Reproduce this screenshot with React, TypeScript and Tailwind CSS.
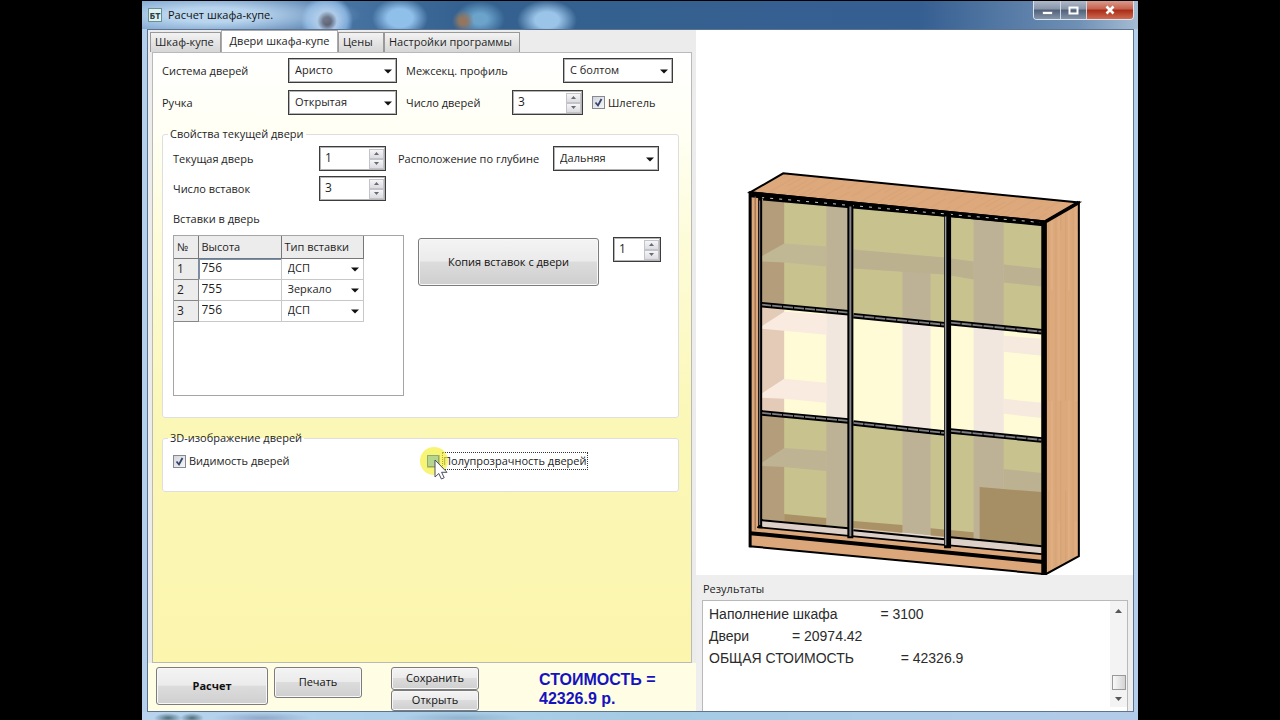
import React, { useState } from 'react';

const LABEL = 'text-[11px] leading-4 text-[#1e1e1e]';

interface SelectProps {
  id: string;
  value: string;
  options: string[];
  className: string;
}

const Select: React.FC<SelectProps> = ({ id, value, options, className }) => (
  <div className={`relative h-[25px] border border-[#3c3c3c] bg-white shadow-[inset_0_0_0_1px_#b4b4b4] ${className}`}>
    <select
      id={id}
      defaultValue={value}
      className="block h-full w-full appearance-none bg-transparent pl-[6px] text-[11px] text-[#1e1e1e] outline-none"
    >
      {options.map((o) => (
        <option key={o}>{o}</option>
      ))}
    </select>
    <Arrow />
  </div>
);

const Arrow: React.FC = () => (
  <svg className="pointer-events-none absolute right-1 top-1/2 -mt-[2px] h-[5px] w-[8px]" viewBox="0 0 8 5">
    <path d="M0 0.500h8L4 4.500z" fill="#111" />
  </svg>
);

interface SpinnerProps {
  id: string;
  initial: number;
  label?: string;
  className: string;
}

const Spinner: React.FC<SpinnerProps> = ({ id, initial, label, className }) => {
  const [value, setValue] = useState(initial);
  const button =
    'flex h-[10px] w-[15px] items-center justify-center border border-[#c3c3cb] bg-gradient-to-b from-[#f6f6f6] to-[#dcdce2]';

  return (
    <div className={`flex h-[25px] border border-[#3c3c3c] bg-white shadow-[inset_0_0_0_1px_#b4b4b4] ${className}`}>
      <input
        id={id}
        type="text"
        aria-label={label}
        value={value}
        onChange={(e) => setValue(Number(e.target.value) || 0)}
        className="min-w-0 flex-1 bg-transparent pb-0.5 pl-[5px] text-xs text-[#1e1e1e] outline-none"
      />
      <div className="flex flex-col justify-center pr-px">
        <button type="button" aria-label="Больше" className={button} onClick={() => setValue(value + 1)}>
          <svg width="5" height="3" viewBox="0 0 5 3"><path d="M0 3h5L2.5 0z" fill="#666b78" /></svg>
        </button>
        <button type="button" aria-label="Меньше" className={button} onClick={() => setValue(value - 1)}>
          <svg width="5" height="3" viewBox="0 0 5 3"><path d="M0 0h5L2.5 3z" fill="#666b78" /></svg>
        </button>
      </div>
    </div>
  );
};

interface CheckProps {
  id: string;
  label: string;
  initial: boolean;
  focused?: boolean;
}

const Check: React.FC<CheckProps> = ({ id, label, initial, focused }) => {
  const [checked, setChecked] = useState(initial);
  return (
    <div className="relative flex items-center gap-0.5">
      <span className="relative h-[13px] w-[13px]">
        <input
          id={id}
          type="checkbox"
          checked={checked}
          onChange={() => setChecked(!checked)}
          className="block h-[13px] w-[13px] appearance-none border border-[#858a92] bg-gradient-to-br from-[#d3d6dc] to-[#f6f6f6]"
        />
        {checked && (
          <svg className="pointer-events-none absolute inset-0" width="13" height="13" viewBox="0 0 13 13">
            <path d="M3.5 6.5L6 9.5L9.5 3" fill="none" stroke="#35446e" strokeWidth="1.8" />
          </svg>
        )}
      </span>
      <label htmlFor={id} className={`${LABEL} border border-dotted ${focused ? 'border-[#333]' : 'border-transparent'}`}>
        {label}
      </label>
      {focused && (
        <svg className="pointer-events-none absolute -left-2 -top-[6px]" width="32" height="34" viewBox="0 0 32 34">
          <circle cx="15" cy="15" r="14" fill="#f4ee2c" opacity="0.65" />
          <path d="M8.500 9.500h11v11h-11z" fill="#b5d68c" stroke="#8dab78" />
          <path d="M16 14v17l3.800-3.500 2.600 5.500 2.800-1.300-2.600-5.400h5.400z" fill="#fff" stroke="#4c4c60" />
        </svg>
      )}
    </div>
  );
};

const Button: React.FC<{ className: string; children: React.ReactNode }> = ({ className, children }) => (
  <button
    type="button"
    className={`rounded-[3px] border border-[#7c7c7c] bg-[linear-gradient(#f4f4f4,#ebebeb_48%,#dcdcdc_50%,#cfcfcf)] text-[11px] text-[#111] shadow-[inset_0_0_0_1px_#f8f8f8] ${className}`}
  >
    {children}
  </button>
);

const TitleBar: React.FC = () => (
  <header className="flex h-[28px] justify-between bg-[radial-gradient(ellipse_150px_24px_at_70px_14px,#b9d5ee_30%,transparent),radial-gradient(circle_at_185px_20px,#4c4b5b_4px,#a9c8e8_10px,#7ba9d8_20px,transparent_26px),radial-gradient(ellipse_28px_20px_at_258px_17px,#8fc0ea_45%,transparent),radial-gradient(circle_at_321px_20px,#94765f_3px,transparent_11px),radial-gradient(ellipse_25px_18px_at_338px_18px,#6ba3cb_30%,transparent),radial-gradient(ellipse_30px_20px_at_405px_19px,#9ac4e8_40%,transparent),linear-gradient(90deg,#6893c5,#34618f_32%,#355f91_78%,#6f90b5_94%,#a5bdd4)] pl-1.5">
    <div className="flex items-center gap-1.5">
      <span className="flex h-[14px] w-[14px] items-center justify-center border border-[#6b9094] bg-[#e1f1f0] text-[9px] font-bold leading-none text-[#24434a]">
        БТ
      </span>
      <h1 className="text-[11px] leading-4 text-[#111]">Расчет шкафа-купе.</h1>
    </div>
    <div className="mr-1 flex h-[19px] overflow-hidden rounded-b-[4px] border border-t-0 border-[#dbe4ed]">
      <button type="button" aria-label="Свернуть" className="flex w-[27px] items-center justify-center border-r border-[#d0d8e0] bg-[linear-gradient(#aeb9c8,#8794a8_45%,#4f6078_50%,#8494ab)]">
        <svg width="11" height="11" viewBox="0 0 11 11"><path d="M0.500 6.500h10v3h-10z" fill="#fff" stroke="#57606e" strokeWidth="0.6" /></svg>
      </button>
      <button type="button" aria-label="Развернуть" className="flex w-[26px] items-center justify-center border-r border-[#d0d8e0] bg-[linear-gradient(#aeb9c8,#8794a8_45%,#4f6078_50%,#8494ab)]">
        <svg width="11" height="9" viewBox="0 0 11 9"><path d="M1.500 1.500h8v6h-8z" fill="none" stroke="#fff" strokeWidth="2" /></svg>
      </button>
      <button type="button" aria-label="Закрыть" className="flex w-[46px] items-center justify-center bg-[linear-gradient(#d99b8d,#c6604c_45%,#a82c18_50%,#cf6a50)]">
        <svg width="10" height="10" viewBox="0 0 10 10"><path d="M1.500 1.500l7 7M8.500 1.500l-7 7" stroke="#fff" strokeWidth="2.600" /></svg>
      </button>
    </div>
  </header>
);

const inactiveTab = 'mt-0.5 h-[20px] border border-b-0 border-[#999] bg-gradient-to-b from-[#f3f3f3] to-[#d6d6d6] text-left pl-1';

const Tabs: React.FC = () => (
  <div role="tablist" className="flex h-[22px] bg-[#ececec] pl-0.5 text-[11px] whitespace-nowrap text-[#1e1e1e]">
    <button role="tab" className={`${inactiveTab} w-[71px]`}>Шкаф-купе</button>
    <button role="tab" aria-selected="true" className="h-[23px] w-[117px] border border-b-0 border-[#aaa] bg-white pb-0.5">Двери шкафа-купе</button>
    <button role="tab" className={`${inactiveTab} w-[46px]`}>Цены</button>
    <button role="tab" className={`${inactiveTab} w-[136px]`}>Настройки программы</button>
  </div>
);

const inserts = [
  { height: '756', type: 'ДСП' },
  { height: '755', type: 'Зеркало' },
  { height: '756', type: 'ДСП' },
];

const InsertsTable: React.FC = () => (
  <div className="h-[161px] w-[231px] border border-[#a5a5a5] bg-white">
    <table className="w-[190px] table-fixed border-collapse text-left text-[11px] text-[#1e1e1e]">
      <thead>
        <tr className="h-[22px] bg-[#ececec]">
          <th className="w-[24px] border-r border-b border-[#777] pl-[3px] font-normal">№</th>
          <th className="w-[83px] border-r border-b border-[#777] pl-[3px] font-normal">Высота</th>
          <th className="border-r border-b border-[#777] pl-[3px] font-normal">Тип вставки</th>
        </tr>
      </thead>
      <tbody>
        {inserts.map((row, i) => (
          <tr key={i} className="h-[21px]">
            <th className="border-r border-b border-[#888] bg-[#ececec] pl-[3px] text-xs font-normal">{i + 1}</th>
            <td className={`border-r border-b border-[#c8c8c8] ${i === 0 ? 'shadow-[inset_1px_1px_0_#6f93b8]' : ''}`}>
              <input aria-label={`Высота ${i + 1}`} defaultValue={row.height} className="block h-[20px] w-full bg-transparent pb-0.5 pl-[3px] text-xs outline-none" />
            </td>
            <td className="border-r border-b border-[#c8c8c8]">
              <div className="relative">
                <select aria-label={`Тип вставки ${i + 1}`} defaultValue={row.type} className="block h-[20px] w-full appearance-none bg-transparent pl-[6px] outline-none">
                  <option>ДСП</option>
                  <option>Зеркало</option>
                </select>
                <Arrow />
              </div>
            </td>
          </tr>
        ))}
      </tbody>
    </table>
  </div>
);

const fieldset = 'rounded-[3px] border border-[#dedede] bg-white pl-[10px]';

const DoorsForm: React.FC = () => (
  <div className="mx-1 flex-1 border border-[#b9b9b9] bg-[linear-gradient(#ffffff,#fffff4_80px,#fdfcd8_190px,#fbf7b6_370px,#fbf5ae)] pr-3 pl-[9px]">
    <div className="flex items-center pt-[5px]">
      <label htmlFor="system" className={`${LABEL} w-[126px]`}>Система дверей</label>
      <Select id="system" value="Аристо" options={['Аристо', 'Командор']} className="w-[109px]" />
      <label htmlFor="profile" className={`${LABEL} ml-[9px] w-[157px]`}>Межсекц. профиль</label>
      <Select id="profile" value="С болтом" options={['С болтом', 'Без болта']} className="w-[110px]" />
    </div>
    <div className="flex items-center pt-[7px]">
      <label htmlFor="handle" className={`${LABEL} w-[126px]`}>Ручка</label>
      <Select id="handle" value="Открытая" options={['Открытая', 'Закрытая']} className="w-[109px]" />
      <label htmlFor="doors" className={`${LABEL} ml-[9px] w-[106px]`}>Число дверей</label>
      <Spinner id="doors" initial={3} className="mr-[9px] w-[71px]" />
      <Check id="brush" label="Шлегель" initial />
    </div>

    <fieldset className={`${fieldset} mt-[11px] pb-[21px]`}>
      <legend className={`${LABEL} -ml-[5px] px-0.5`}>Свойства текущей двери</legend>
      <div className="flex items-center pt-1">
        <label htmlFor="current" className={`${LABEL} w-[146px]`}>Текущая дверь</label>
        <Spinner id="current" initial={1} className="w-[67px]" />
        <label htmlFor="depth" className={`${LABEL} ml-3 w-[155px] whitespace-nowrap`}>Расположение по глубине</label>
        <Select id="depth" value="Дальняя" options={['Дальняя', 'Ближняя']} className="w-[106px]" />
      </div>
      <div className="flex items-center pt-[5px]">
        <label htmlFor="count" className={`${LABEL} w-[146px]`}>Число вставок</label>
        <Spinner id="count" initial={3} className="w-[67px]" />
      </div>
      <p className={`${LABEL} pt-[10px] pb-2`}>Вставки в дверь</p>
      <div className="flex items-start">
        <InsertsTable />
        <Button className="mt-[3px] ml-[14px] h-[48px] w-[181px]">Копия вставок с двери</Button>
        <Spinner id="copyFrom" label="Копия вставок с двери" initial={1} className="mt-0.5 ml-[14px] w-[48px]" />
      </div>
    </fieldset>

    <fieldset className={`${fieldset} mt-3 pb-[21px]`}>
      <legend className={`${LABEL} -ml-[5px] px-0.5`}>3D-изображение дверей</legend>
      <div className="flex pt-1.5">
        <div className="w-[254px]">
          <Check id="visible" label="Видимость дверей" initial />
        </div>
        <Check id="translucent" label="Полупрозрачность дверей" initial={false} focused />
      </div>
    </fieldset>
  </div>
);

const Footer: React.FC = () => (
  <div className="flex h-[48px] items-start bg-[#fffde3] pt-1 pl-2">
    <Button className="h-[38px] w-[112px] font-bold">Расчет</Button>
    <Button className="ml-1.5 h-[31px] w-[88px]">Печать</Button>
    <div className="ml-[29px] flex flex-col">
      <Button className="h-[23px] w-[88px]">Сохранить</Button>
      <Button className="h-[21px] w-[88px]">Открыть</Button>
    </div>
    <p className="ml-[60px] w-[130px] pt-[3px] font-['Liberation_Sans',sans-serif] text-base leading-[19px] font-bold text-[#1512c0]">
      СТОИМОСТЬ = 42326.9 р.
    </p>
  </div>
);

// Horizontal door rails: x1, y1, x2, y2 of the centre line
const rails = [
  [762, 304, 849, 312],
  [854, 315, 945, 324],
  [951, 322, 1042, 331],
  [762, 412, 849, 420],
  [854, 422, 945, 432],
  [951, 430, 1042, 439],
];

const Wardrobe: React.FC = () => (
  <svg viewBox="697 30 436 544" className="block w-full" role="img" aria-label="Шкаф-купе">
    <defs>
      <pattern id="grain" width="17" height="400" patternUnits="userSpaceOnUse">
        <rect width="17" height="400" fill="#dca97c" />
        <path d="M2 0v400M7 0v230M12 90v310" stroke="#d29e70" strokeWidth="0.8" />
        <path d="M5 120v280M15 0v290" stroke="#e2b48b" strokeWidth="0.8" />
      </pattern>
      <pattern id="grainTop" width="80" height="9" patternUnits="userSpaceOnUse" patternTransform="rotate(-30)">
        <rect width="80" height="9" fill="#dda87b" />
        <path d="M0 2h50M30 6h50" stroke="#d39e70" strokeWidth="0.7" />
      </pattern>
      <clipPath id="front">
        <path d="M762 198L1042 223V552L762 527z" />
      </clipPath>
    </defs>

    {/* Carcass */}
    <path d="M751 192L1046 222V573L751 545z" fill="#dba679" />
    <path d="M751 192L784 173L1079 202L1046 221z" fill="url(#grainTop)" stroke="#000" strokeWidth="2" />
    <path d="M1046 221L1079 202V555L1046 573z" fill="url(#grain)" stroke="#000" strokeWidth="2" />

    {/* Inside */}
    <g clipPath="url(#front)">
      <path d="M762 190h280v370H762z" fill="#fffbd6" />
      <path d="M762 190h23v340h-23z" fill="#e4cbb8" />
      <path d="M827 190h22v345h-22zM903 270h28v270h-28zM974 205h30v340h-30z" fill="#f1e7df" />
      <path d="M762 256L785 243L827 246V266L785 262L762 261z" fill="#f5eedf" />
      <path d="M854 249L945 257L974 261V279L945 274L854 268z" fill="#efe5d6" />
      <path d="M1004 264L1042 268V286L1004 282z" fill="#f0e6d8" />
      <path d="M762 326L785 311L827 314V334L785 330L762 328z" fill="#f9ebe0" />
      <path d="M762 393L785 378L827 382V402L785 398L762 397z" fill="#f9ebe0" />
      <path d="M1004 335L1042 338V355L1004 351zM1004 398L1042 402V417L1004 413z" fill="#f6e9de" />
      <path d="M762 462L785 447L827 450V470L785 466L762 465z" fill="#f2e8da" />
      <path d="M1004 468L1042 472V492L1004 488z" fill="#f0e6d8" />
      <path d="M980 486L1042 491V548L980 542z" fill="#d4b896" />
      <path d="M785 513L827 517V526L785 522zM854 520L903 524V535L854 531zM931 527L974 531V541L931 537z" fill="#d9bc98" />
      {/* Chipboard inserts darken what is behind them */}
      <g fill="#c8c5ab" className="mix-blend-multiply">
        <path d="M762 198L1042 223V331L951 322V323L849 312L762 304z" />
        <path d="M762 412L849 420L951 430L1042 439V545L762 518z" />
      </g>
      <path d="M762 519L1042 545V553L762 527z" fill="#ddd0c8" />
    </g>

    {/* Rails and stiles */}
    {rails.map(([x1, y1, x2, y2]) => (
      <g key={`${x1}-${y1}`}>
        <line x1={x1} y1={y1} x2={x2} y2={y2} stroke="#000" strokeWidth="5.500" />
        <line x1={x1} y1={y1} x2={x2} y2={y2} stroke="#7d7d82" strokeWidth="1.800" strokeDasharray="10 1" />
      </g>
    ))}
    <path d="M762 519L849 527M854 529L945 538M951 536L1042 545" stroke="#000" strokeWidth="2" />
    <path d="M758 526L1042 553" stroke="#000" strokeWidth="1.800" />
    <path d="M751 532L1046 561" stroke="#000" strokeWidth="4" />
    <path d="M752 194L1046 223" stroke="#000" strokeWidth="6" />
    <path d="M764 198L1044 223" stroke="#000" strokeWidth="4" />
    <path d="M762 197L1040 222" stroke="#c8c8c8" strokeWidth="1" strokeDasharray="3 6" />
    <path d="M751 191V546" stroke="#000" strokeWidth="3" />
    <path d="M756 196V529" stroke="#8b6648" strokeWidth="1" />
    <path d="M761 196V527" stroke="#000" strokeWidth="4" />
    <path d="M760.500 200V524" stroke="#85858a" strokeWidth="1" />
    <path d="M851 204V537" stroke="#000" strokeWidth="6" />
    <path d="M851 206V535" stroke="#85858a" strokeWidth="2" />
    <path d="M948 213V547" stroke="#000" strokeWidth="7" />
    <path d="M946 216V544" stroke="#a0a0a4" strokeWidth="1.500" />
    <path d="M1044 221V574" stroke="#000" strokeWidth="5" />
    <path d="M750 545L1046 573" stroke="#000" strokeWidth="2" />
    <path d="M1046 221L1079 202" stroke="#000" strokeWidth="3.500" />
  </svg>
);

const report = [
  'Наполнение шкафа           = 3100',
  'Двери           = 20974.42',
  'ОБЩАЯ СТОИМОСТЬ            = 42326.9',
].join('\n');

const Results: React.FC = () => (
  <section className="flex flex-1 flex-col bg-[#eeeeee] pt-[6px] pr-[5px] pl-[6px]">
    <label htmlFor="results" className={`${LABEL} pb-[3px] pl-px`}>Результаты</label>
    <div className="flex flex-1 border border-b-0 border-[#b9b9b9] bg-white">
      <textarea
        id="results"
        readOnly
        value={report}
        className="block min-w-0 flex-1 resize-none overflow-hidden bg-transparent pt-0.5 pl-[6px] font-['Liberation_Sans',sans-serif] text-sm leading-[22px] text-[#2b2b2b] outline-none"
      />
      <div className="mb-1 flex w-[17px] flex-col items-center justify-between bg-[#f3f3f3] pt-2 pb-1.5">
        <svg width="7" height="4" viewBox="0 0 7 4"><path d="M0 4h7L3.500 0z" fill="#555" /></svg>
        <div className="flex flex-col items-center gap-[7px]">
          <span className="h-[15px] w-[14px] border border-[#999] bg-gradient-to-r from-[#f8f8f8] to-[#d4d4d4]" />
          <svg width="7" height="4" viewBox="0 0 7 4"><path d="M0 0h7L3.500 4z" fill="#555" /></svg>
        </div>
      </div>
    </div>
  </section>
);

const App: React.FC = () => (
  <div className="flex min-h-screen bg-black px-[142px] pt-px font-['Open_Sans','Noto_Sans',sans-serif]">
    <div className="flex flex-1 flex-col rounded-t-[5px] bg-[#b4cfe9]">
      <TitleBar />
      <main className="mr-1 ml-[5px] flex flex-1 border border-[#5d7390] bg-[#ececec]">
        <div className="flex w-[548px] shrink-0 flex-col">
          <Tabs />
          <DoorsForm />
          <Footer />
        </div>
        <div className="flex min-w-0 flex-1 flex-col bg-white">
          <Wardrobe />
          <Results />
        </div>
      </main>
      <div className="h-2 bg-[radial-gradient(ellipse_14px_5px_at_26px_6px,#4d6f7c,transparent),radial-gradient(ellipse_12px_5px_at_50px_6px,#4d6f7c,transparent),radial-gradient(ellipse_50px_6px_at_120px_6px,#8fa9c9,transparent),radial-gradient(ellipse_60px_6px_at_320px_6px,#90b4cf,transparent),linear-gradient(90deg,#b7d3ee,#a4cbe4_50%,#b3cbe8)]" />
    </div>
  </div>
);

export default App;
